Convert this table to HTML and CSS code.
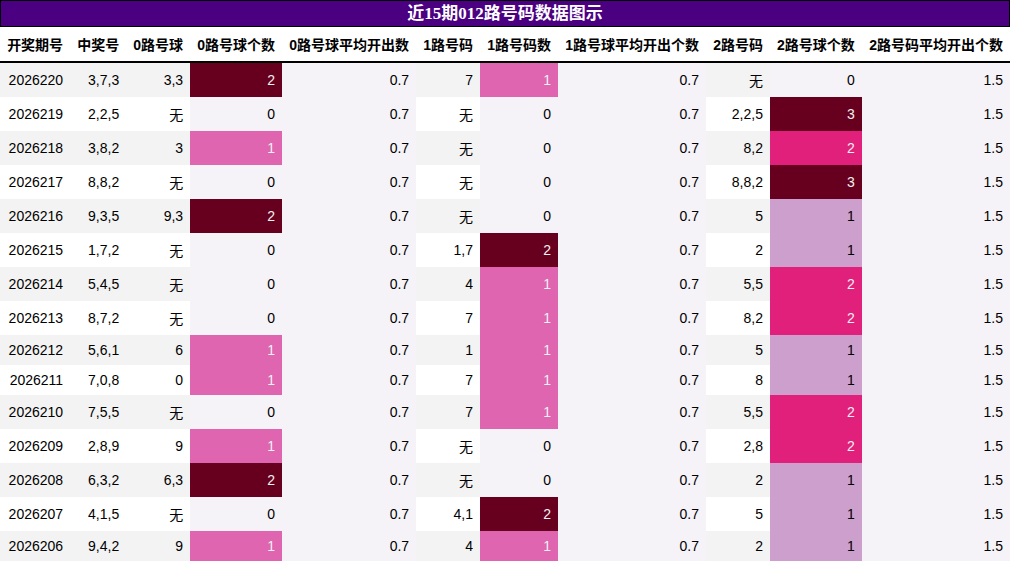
FILE: index.html
```html
<!DOCTYPE html>
<html lang="zh">
<head>
<meta charset="utf-8">
<title>近15期012路号码数据图示</title>
<link rel="stylesheet" href="styles.css">
</head>
<body>
<div class="title">近15期012路号码数据图示</div>
<table class="data">
<thead>
<tr><th>开奖期号</th><th>中奖号</th><th>0路号球</th><th>0路号球个数</th><th>0路号球平均开出数</th><th>1路号码</th><th>1路号码数</th><th>1路号球平均开出个数</th><th>2路号码</th><th>2路号球个数</th><th>2路号码平均开出个数</th></tr>
</thead>
<tbody>
<tr><td>2026220</td><td>3,7,3</td><td>3,3</td><td class="c2">2</td><td class="avg">0.7</td><td>7</td><td class="c1">1</td><td class="avg">0.7</td><td>无</td><td class="c0">0</td><td class="avg">1.5</td></tr>
<tr><td>2026219</td><td>2,2,5</td><td>无</td><td class="c0">0</td><td class="avg">0.7</td><td>无</td><td class="c0">0</td><td class="avg">0.7</td><td>2,2,5</td><td class="d3">3</td><td class="avg">1.5</td></tr>
<tr><td>2026218</td><td>3,8,2</td><td>3</td><td class="c1">1</td><td class="avg">0.7</td><td>无</td><td class="c0">0</td><td class="avg">0.7</td><td>8,2</td><td class="d2">2</td><td class="avg">1.5</td></tr>
<tr><td>2026217</td><td>8,8,2</td><td>无</td><td class="c0">0</td><td class="avg">0.7</td><td>无</td><td class="c0">0</td><td class="avg">0.7</td><td>8,8,2</td><td class="d3">3</td><td class="avg">1.5</td></tr>
<tr><td>2026216</td><td>9,3,5</td><td>9,3</td><td class="c2">2</td><td class="avg">0.7</td><td>无</td><td class="c0">0</td><td class="avg">0.7</td><td>5</td><td class="d1">1</td><td class="avg">1.5</td></tr>
<tr><td>2026215</td><td>1,7,2</td><td>无</td><td class="c0">0</td><td class="avg">0.7</td><td>1,7</td><td class="c2">2</td><td class="avg">0.7</td><td>2</td><td class="d1">1</td><td class="avg">1.5</td></tr>
<tr><td>2026214</td><td>5,4,5</td><td>无</td><td class="c0">0</td><td class="avg">0.7</td><td>4</td><td class="c1">1</td><td class="avg">0.7</td><td>5,5</td><td class="d2">2</td><td class="avg">1.5</td></tr>
<tr><td>2026213</td><td>8,7,2</td><td>无</td><td class="c0">0</td><td class="avg">0.7</td><td>7</td><td class="c1">1</td><td class="avg">0.7</td><td>8,2</td><td class="d2">2</td><td class="avg">1.5</td></tr>
<tr><td>2026212</td><td>5,6,1</td><td>6</td><td class="c1">1</td><td class="avg">0.7</td><td>1</td><td class="c1">1</td><td class="avg">0.7</td><td>5</td><td class="d1">1</td><td class="avg">1.5</td></tr>
<tr><td>2026211</td><td>7,0,8</td><td>0</td><td class="c1">1</td><td class="avg">0.7</td><td>7</td><td class="c1">1</td><td class="avg">0.7</td><td>8</td><td class="d1">1</td><td class="avg">1.5</td></tr>
<tr><td>2026210</td><td>7,5,5</td><td>无</td><td class="c0">0</td><td class="avg">0.7</td><td>7</td><td class="c1">1</td><td class="avg">0.7</td><td>5,5</td><td class="d2">2</td><td class="avg">1.5</td></tr>
<tr><td>2026209</td><td>2,8,9</td><td>9</td><td class="c1">1</td><td class="avg">0.7</td><td>无</td><td class="c0">0</td><td class="avg">0.7</td><td>2,8</td><td class="d2">2</td><td class="avg">1.5</td></tr>
<tr><td>2026208</td><td>6,3,2</td><td>6,3</td><td class="c2">2</td><td class="avg">0.7</td><td>无</td><td class="c0">0</td><td class="avg">0.7</td><td>2</td><td class="d1">1</td><td class="avg">1.5</td></tr>
<tr><td>2026207</td><td>4,1,5</td><td>无</td><td class="c0">0</td><td class="avg">0.7</td><td>4,1</td><td class="c2">2</td><td class="avg">0.7</td><td>5</td><td class="d1">1</td><td class="avg">1.5</td></tr>
<tr><td>2026206</td><td>9,4,2</td><td>9</td><td class="c1">1</td><td class="avg">0.7</td><td>4</td><td class="c1">1</td><td class="avg">0.7</td><td>2</td><td class="d1">1</td><td class="avg">1.5</td></tr>
</tbody>
</table>
</body>
</html>
```
FILE: styles.css
```css
html, body {
  margin: 0;
  padding: 0;
  background: #ffffff;
}
body {
  width: 1010px;
  font-family: "Liberation Sans", "Noto Sans CJK SC", sans-serif;
  font-size: 14px;
  color: #000;
}
.title {
  height: 25px;
  line-height: 25px;
  border: 1px solid #000;
  background: #4b0082;
  color: #ffffff;
  text-align: center;
  font-family: "Liberation Serif", "Noto Sans CJK SC", serif;
  font-weight: bold;
  font-size: 17px;
}
.data {
  width: 100%;
  border-collapse: collapse;
  border-spacing: 0;
}
.data th {
  padding: 7px;
  text-align: right;
  font-weight: bold;
  white-space: nowrap;
  background: #ffffff;
  border-bottom: 2px solid #000;
}
.data td {
  padding: 7px;
  text-align: right;
  white-space: nowrap;
  background: #ffffff;
}
.data tbody tr:nth-child(odd) > td {
  background: #f3f3f3;
}
.data tbody tr > td.avg,
.data tbody tr > td.c0 {
  background: #f5f3f8;
  color: #000;
}
.data tbody tr > td.c1 {
  background: #df65b0;
  color: #f1f1f1;
}
.data tbody tr > td.c2,
.data tbody tr > td.d3 {
  background: #67001f;
  color: #f1f1f1;
}
.data tbody tr > td.d1 {
  background: #cd9fcc;
  color: #000;
}
.data tbody tr > td.d2 {
  background: #e0207a;
  color: #f1f1f1;
}
```
